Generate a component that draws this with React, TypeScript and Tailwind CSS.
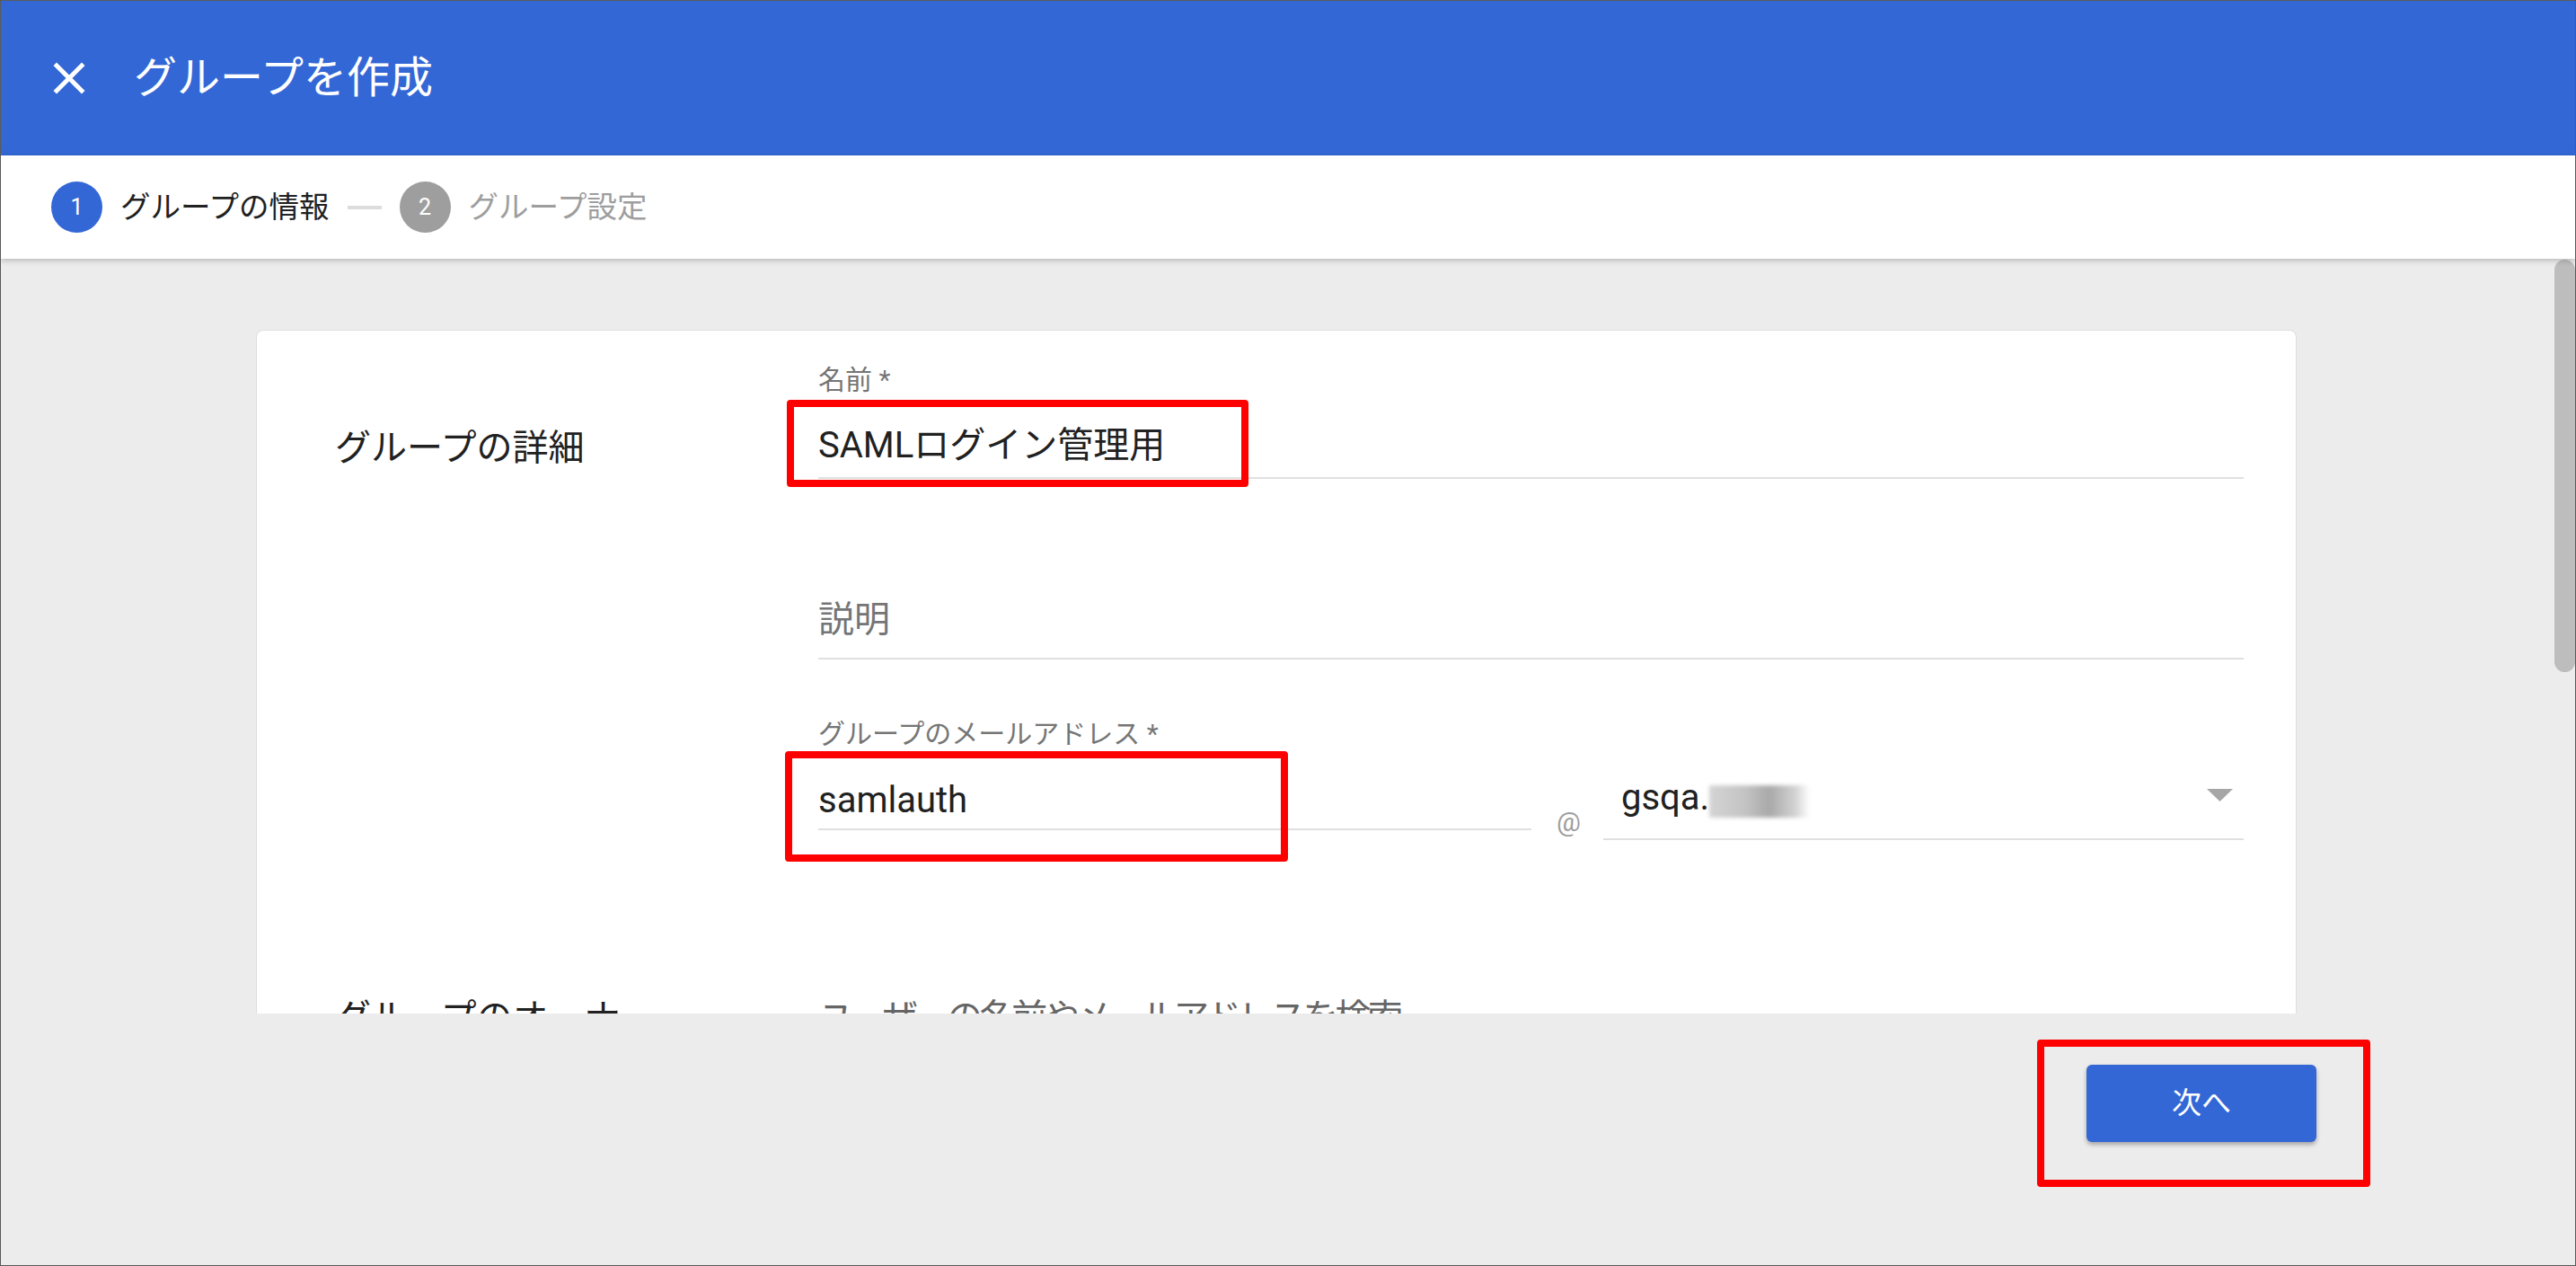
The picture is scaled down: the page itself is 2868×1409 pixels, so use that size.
export default function App() {
  return (
    <div className="w-[2868px] h-[1409px] flex flex-col overflow-hidden border border-[#5a5a5a] bg-[#ececec] font-['Roboto','Noto_Sans_CJK_JP',sans-serif] text-[#212121]">
      {/* Header */}
      <header className="h-[172px] shrink-0 bg-[#3367d6] flex items-center text-white">
        <svg className="ml-[46px] w-[60px] h-[60px]" viewBox="0 0 24 24" fill="#ffffff">
          <path d="M19 6.41L17.59 5 12 10.59 6.41 5 5 6.41 10.59 12 5 17.59 6.41 19 12 13.41 17.59 19 19 17.59 13.41 12z" />
        </svg>
        <h1 className="ml-[42px] text-[48px] leading-[56px] font-normal">グループを作成</h1>
      </header>

      {/* Stepper */}
      <div className="relative z-10 h-[115px] shrink-0 bg-white flex items-center pl-[56px] gap-[20px] shadow-[0_2px_6px_rgba(0,0,0,0.22)]">
        <div className="w-[57px] h-[57px] rounded-full bg-[#3367d6] text-white text-[25px] flex items-center justify-center">1</div>
        <span className="text-[33.5px] leading-[40px] text-[#212121]">グループの情報</span>
        <div className="w-[38px] h-[4px] bg-[#dcdcdc]" />
        <div className="w-[57px] h-[57px] rounded-full bg-[#9e9e9e] text-white text-[25px] flex items-center justify-center">2</div>
        <span className="text-[33.5px] leading-[40px] text-[#9e9e9e]">グループ設定</span>
      </div>

      {/* Scroll area */}
      <main className="relative h-[840px] shrink-0 overflow-hidden">
        <div className="pt-[79px] pl-[284px]">
          <div className="w-[2272px] bg-white rounded-[8px] border border-[#dedede] pl-[87px] pr-[58px] pt-[37px] pb-[200px]">
            {/* Section 1 */}
            <div className="flex">
              <div className="w-[538px] shrink-0 pt-[70px] text-[40px] leading-[48px] text-[#212121]">グループの詳細</div>
              <div className="flex-1 flex flex-col">
                {/* Name */}
                <div className="relative">
                  <div className="text-[30px] leading-[36px] text-[#757575]">名前 *</div>
                  <div className="mt-[31px] text-[40px] leading-[48px] pb-[11px] border-b-2 border-[#e0e0e0] text-[#212121]">SAMLログイン管理用</div>
                  <div className="absolute left-[-35px] top-[40px] w-[514px] h-[97px] border-[8px] border-[#ff0000] rounded-[4px]" />
                </div>
                {/* Description */}
                <div className="mt-[133px] text-[40px] leading-[48px] pb-[18px] border-b-2 border-[#e0e0e0] text-[#757575]">説明</div>
                {/* Email */}
                <div className="mt-[65px] flex items-start">
                  <div className="relative w-[794px] shrink-0">
                    <div className="text-[30px] leading-[36px] text-[#757575]">グループのメールアドレス *</div>
                    <div className="mt-[32px] text-[40px] leading-[48px] pb-[7px] border-b-2 border-[#e0e0e0] text-[#212121]">samlauth</div>
                    <div className="absolute left-[-37px] top-[37px] w-[560px] h-[123px] border-[8px] border-[#ff0000] rounded-[4px]" />
                  </div>
                  <div className="ml-[28px] mt-[98px] text-[30px] leading-[36px] text-[#9e9e9e]">@</div>
                  <div className="ml-[25px] flex-1 mt-[65px] pb-[21px] border-b-2 border-[#e0e0e0] flex items-start justify-between">
                    <div className="pl-[20px] flex items-start h-[48px]">
                      <span className="text-[40px] leading-[48px] text-[#212121]">gsqa.</span>
                      <div className="mt-[10px] w-[112px] h-[36px] blur-[2px] bg-[linear-gradient(90deg,#d4d4d4_0%,#c4c4c4_35%,#a9a9a9_60%,#d2d2d2_85%,#ffffff_100%)]" />
                    </div>
                    <svg className="mt-[14px] mr-[12px] w-[29px] h-[14px]" viewBox="0 0 29 14" fill="#a6a6a6">
                      <path d="M0 0 L29 0 L14.5 14 Z" />
                    </svg>
                  </div>
                </div>
              </div>
            </div>
            {/* Section 2 */}
            <div className="flex mt-[174px]">
              <div className="w-[538px] shrink-0 text-[40px] leading-[48px] text-[#212121]">グループのオーナー</div>
              <div className="flex-1 text-[40px] leading-[48px] tracking-[-4px] text-[#666666]">ユーザーの名前やメールアドレスを検索</div>
            </div>
          </div>
        </div>
        {/* Scrollbar thumb */}
        <div className="absolute right-0 top-[1px] w-[23px] h-[459px] rounded-full bg-[#bdbdbd]" />
      </main>

      {/* Footer */}
      <footer className="flex-1 flex justify-end items-start pt-[57px] pr-[288px]">
        <div className="relative">
          <button className="w-[256px] h-[86px] rounded-[6px] bg-[#3367d6] text-white text-[33px] shadow-[0_3px_5px_rgba(0,0,0,0.3)]">次へ</button>
          <div className="absolute left-[-55px] top-[-28px] w-[371px] h-[164px] border-[8px] border-[#ff0000] rounded-[4px]" />
        </div>
      </footer>
    </div>
  );
}
